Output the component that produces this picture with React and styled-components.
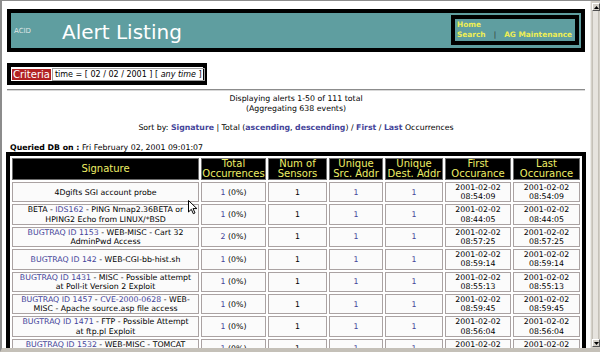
import React from "react";
import styled, { createGlobalStyle } from "styled-components";

const GlobalStyle = createGlobalStyle`
  html, body {
    margin: 0;
    padding: 0;
    background: #fff;
    overflow: hidden;
  }
  body {
    font-family: "DejaVu Sans", Verdana, sans-serif;
  }
`;

const Window = styled.div`
  position: relative;
  display: flex;
  width: 600px;
  height: 352px;
  box-sizing: border-box;
  border-top: 1px solid #8c8c8c;
  border-left: 2px solid #8c8c8c;
  border-bottom: 4px solid #c4c0b8;
  background: #fff;
  overflow: hidden;
`;

const Page = styled.div`
  flex: 1;
  min-width: 0;
  padding: 8px 3px 0 5px;
  overflow: hidden;
  font-size: 7.8px;
  color: #000;
`;

const Banner = styled.div`
  display: flex;
  align-items: flex-start;
  width: 578px;
  height: 43px;
  box-sizing: border-box;
  border: 4px solid #000;
  background: #5f9ea0;
`;

const Brand = styled.span`
  margin: 15px 0 0 3px;
  font-size: 7px;
  line-height: 7px;
  color: #dfe6e6;
`;

const Title = styled.h1`
  margin: 9px 0 0 31px;
  font-size: 20px;
  line-height: 20px;
  font-weight: normal;
  color: #fff;
`;

const NavBox = styled.div`
  margin: 2px 2px 0 auto;
  width: 128px;
  height: 30px;
  box-sizing: border-box;
  border: 4px solid #000;
  padding: 1px 2px;
  background: #5f9ea0;
  font-size: 7.4px;
  line-height: 10px;
  font-weight: bold;
  color: #eeee55;
`;

const NavLine = styled.div`
  white-space: nowrap;
`;

const NavSep = styled.span`
  padding: 0 8px 0 8px;
  font-weight: normal;
  color: #303030;
`;

const CriteriaBox = styled.div`
  display: flex;
  align-items: center;
  margin-top: 11px;
  width: 200px;
  height: 22px;
  box-sizing: border-box;
  border: 4px solid #000;
  padding: 0 1px;
  background: #fff;
`;

const CriteriaLabel = styled.span`
  padding: 0 1px;
  background: #b22222;
  color: #fff;
  font-size: 10px;
  line-height: 11px;
`;

const CriteriaValue = styled.span`
  flex: 1;
  margin-left: 1px;
  height: 13px;
  box-sizing: border-box;
  border: 1px solid #a0a0a0;
  padding: 0 2px;
  font-size: 8px;
  line-height: 11px;
  white-space: nowrap;
`;

const Rule = styled.hr`
  width: 578px;
  margin: 4px 0 0;
  border: 0;
  border-top: 1px solid #8c8c8c;
  border-bottom: 1px solid #d8d8d8;
`;

const Summary = styled.div`
  width: 578px;
  margin-top: ${(p) => p.$gap}px;
  text-align: center;
  line-height: 10px;
`;

const SortLink = styled.span`
  color: #45459a;
  font-weight: bold;
`;

const Queried = styled.div`
  margin-top: 10px;
  padding-left: 3px;
  line-height: 9px;
`;

const Grid = styled.table`
  width: 580px;
  margin-left: -1px;
  border: 4px solid #000;
  border-spacing: 2px;
  table-layout: fixed;
  background: #fff;
`;

const Head = styled.th`
  width: ${(p) => p.$w}px;
  box-sizing: border-box;
  padding: 0;
  border: 1px solid #6c6c6c;
  background: #000;
  color: #eeee66;
  font-size: 10px;
  line-height: 10px;
  font-weight: normal;
  text-align: center;
`;

const Cell = styled.td`
  box-sizing: border-box;
  padding: 0 1px;
  border: 1px solid #aaa2a2;
  background: #fbfbfb;
  font-size: 7.8px;
  line-height: 9.2px;
  text-align: center;
  white-space: nowrap;
`;

const Link = styled.span`
  color: #44449a;
`;

const Scrollbar = styled.div`
  flex: none;
  display: flex;
  flex-direction: column;
  width: 10px;
  box-sizing: border-box;
  border-left: 1px solid #ecebe8;
  background: #d4d0c8;
`;

const ScrollButton = styled.div`
  display: flex;
  align-items: center;
  justify-content: center;
  height: 8px;
  margin: ${(p) => (p.$down ? "0 0 1px 1px" : "2px 0 0 1px")};
  box-sizing: border-box;
  border: 1px solid;
  border-color: #fff #505050 #505050 #fff;
  background: #d4d0c8;
`;

const Track = styled.div`
  flex: 1;
  margin: 0 1px;
  border-left: 1px solid #c4c0b8;
  border-right: 1px solid #c4c0b8;
  background: #e6e3de;
`;

const Cursor = styled.svg`
  position: absolute;
  left: 186px;
  top: 199px;
`;

const columns = [
  { w: 187, label: "Signature" },
  { w: 65, label: <>Total<br />Occurrences</> },
  { w: 59, label: <>Num of<br />Sensors</> },
  { w: 54, label: <>Unique<br />Src. Addr</> },
  { w: 58, label: <>Unique<br />Dest. Addr</> },
  { w: 66, label: <>First<br />Occurance</> },
  { w: 67, label: <>Last<br />Occurance</> },
];

const rows = [
  {
    sig: <>4Dgifts SGI account probe</>,
    total: "1",
    first: "08:54:09",
    last: "08:54:09",
  },
  {
    sig: (
      <>
        BETA - <Link>IDS162</Link> - PING Nmap2.36BETA or
        <br />
        HPING2 Echo from LINUX/*BSD
      </>
    ),
    total: "1",
    first: "08:44:05",
    last: "08:44:05",
  },
  {
    sig: (
      <>
        <Link>BUGTRAQ ID 1153</Link> - WEB-MISC - Cart 32
        <br />
        AdminPwd Access
      </>
    ),
    total: "2",
    first: "08:57:25",
    last: "08:57:25",
  },
  {
    sig: (
      <>
        <Link>BUGTRAQ ID 142</Link> - WEB-CGI-bb-hist.sh
      </>
    ),
    total: "1",
    first: "08:59:14",
    last: "08:59:14",
  },
  {
    sig: (
      <>
        <Link>BUGTRAQ ID 1431</Link> - MISC - Possible attempt
        <br />
        at Poll-it Version 2 Exploit
      </>
    ),
    total: "1",
    first: "08:55:13",
    last: "08:55:13",
  },
  {
    sig: (
      <>
        <Link>BUGTRAQ ID 1457</Link> - <Link>CVE-2000-0628</Link> - WEB-
        <br />
        MISC - Apache source.asp file access
      </>
    ),
    total: "1",
    first: "08:59:45",
    last: "08:59:45",
  },
  {
    sig: (
      <>
        <Link>BUGTRAQ ID 1471</Link> - FTP - Possible Attempt
        <br />
        at ftp.pl Exploit
      </>
    ),
    total: "1",
    first: "08:56:04",
    last: "08:56:04",
  },
  {
    sig: (
      <>
        <Link>BUGTRAQ ID 1532</Link> - WEB-MISC - TOMCAT
        <br />
        server snoop access
      </>
    ),
    total: "1",
    first: "08:58:31",
    last: "08:58:31",
  },
];

function Arrow({ down }) {
  return (
    <svg width="5" height="3" viewBox="0 0 5 3">
      <path d={down ? "M0 0h5L2.5 3z" : "M0 3h5L2.5 0z"} fill="#000" />
    </svg>
  );
}

export default function App() {
  return (
    <Window>
      <GlobalStyle />
      <Page>
        <Banner>
          <Brand>ACID</Brand>
          <Title>Alert Listing</Title>
          <NavBox>
            <NavLine>Home</NavLine>
            <NavLine>
              Search<NavSep>|</NavSep>AG Maintenance
            </NavLine>
          </NavBox>
        </Banner>

        <CriteriaBox>
          <CriteriaLabel>Criteria</CriteriaLabel>
          <CriteriaValue>
            time = [ 02 / 02 / 2001 ] [ <i>any time</i> ]
          </CriteriaValue>
        </CriteriaBox>

        <Rule />

        <Summary $gap={3}>
          Displaying alerts 1-50 of 111 total
          <br />
          (Aggregating 638 events)
        </Summary>
        <Summary $gap={9}>
          Sort by: <SortLink>Signature</SortLink> | Total (
          <SortLink>ascending</SortLink>, <SortLink>descending</SortLink>) /{" "}
          <SortLink>First</SortLink> / <SortLink>Last</SortLink> Occurrences
        </Summary>

        <Queried>
          <b>Queried DB on :</b> Fri February 02, 2001 09:01:07
        </Queried>

        <Grid>
          <thead>
            <tr>
              {columns.map((c, i) => (
                <Head key={i} $w={c.w}>
                  {c.label}
                </Head>
              ))}
            </tr>
          </thead>
          <tbody>
            {rows.map((r, i) => (
              <tr key={i}>
                <Cell>{r.sig}</Cell>
                <Cell>
                  <Link>{r.total}</Link> (0%)
                </Cell>
                <Cell>1</Cell>
                <Cell>
                  <Link>1</Link>
                </Cell>
                <Cell>
                  <Link>1</Link>
                </Cell>
                <Cell>
                  2001-02-02
                  <br />
                  {r.first}
                </Cell>
                <Cell>
                  2001-02-02
                  <br />
                  {r.last}
                </Cell>
              </tr>
            ))}
          </tbody>
        </Grid>
      </Page>

      <Scrollbar>
        <ScrollButton>
          <Arrow />
        </ScrollButton>
        <Track />
        <ScrollButton $down>
          <Arrow down />
        </ScrollButton>
      </Scrollbar>

      <Cursor width="10" height="15" viewBox="0 0 10 15">
        <path
          d="M0.5 0.5v11.5l2.8-2.7 2 4.4 1.7-0.8-2-4.3h3.9z"
          fill="#fff"
          stroke="#000"
          strokeWidth="1"
          strokeLinejoin="round"
        />
      </Cursor>
    </Window>
  );
}
